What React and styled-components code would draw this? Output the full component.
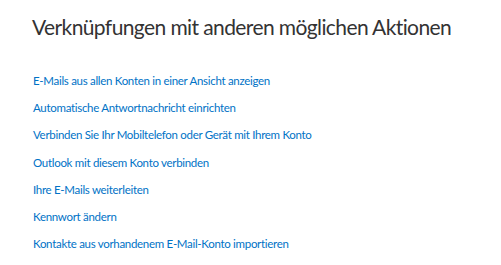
import React from "react";
import styled, { createGlobalStyle } from "styled-components";

const Global = createGlobalStyle`
  html, body { margin: 0; padding: 0; background: #fff; }
  body { font-family: "Lato", "Noto Sans", sans-serif; }
`;

const Page = styled.div`
  width: 501px;
  height: 265px;
  box-sizing: border-box;
  padding: 12px 0 0 32px;
  background: #fff;
  overflow: hidden;
`;

const Title = styled.h1`
  margin: 0;
  font-family: "Lato", sans-serif;
  font-weight: 400;
  font-size: 21px;
  letter-spacing: -0.6px;
  line-height: 30px;
  color: #333333;
  white-space: nowrap;
`;

const LinkList = styled.ul`
  list-style: none;
  margin: 25px 0 0 1px;
  padding: 0;
  display: flex;
  flex-direction: column;
`;

const Item = styled.li`
  font-size: 11.5px;
  line-height: 27.2px;
`;

const Link = styled.a`
  display: block;
  font-family: "Lato", sans-serif;
  font-size: 11.5px;
  letter-spacing: -0.3px;
  color: #0072c6;
  text-decoration: none;
  white-space: nowrap;
`;

const links = [
  "E-Mails aus allen Konten in einer Ansicht anzeigen",
  "Automatische Antwortnachricht einrichten",
  "Verbinden Sie Ihr Mobiltelefon oder Gerät mit Ihrem Konto",
  "Outlook mit diesem Konto verbinden",
  "Ihre E-Mails weiterleiten",
  "Kennwort ändern",
  "Kontakte aus vorhandenem E-Mail-Konto importieren",
];

export default function App() {
  return (
    <Page>
      <Global />
      <Title>Verknüpfungen mit anderen möglichen Aktionen</Title>
      <LinkList>
        {links.map((t) => (
          <Item key={t}>
            <Link href="#">{t}</Link>
          </Item>
        ))}
      </LinkList>
    </Page>
  );
}
